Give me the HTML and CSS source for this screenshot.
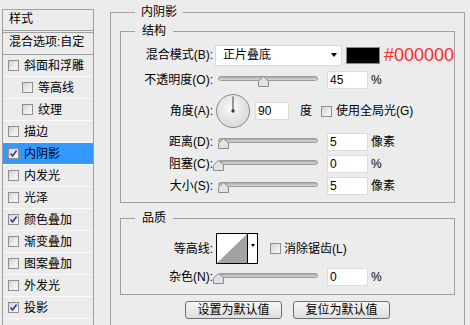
FILE: index.html
```html
<!DOCTYPE html>
<html lang="zh-CN">
<head>
<meta charset="utf-8">
<title>图层样式 - 内阴影</title>
<link rel="stylesheet" href="styles.css">
</head>
<body>
<div class="dialog">
  <nav class="styles-list">
    <div class="list-head">样式</div>
    <div class="list-blend">混合选项:自定</div>
    <ul class="list">
      <li class="item"><span class="cb"></span>斜面和浮雕</li>
      <li class="item sub"><span class="cb"></span>等高线</li>
      <li class="item sub"><span class="cb"></span>纹理</li>
      <li class="item"><span class="cb"></span>描边</li>
      <li class="item selected"><span class="cb"><svg viewBox="0 0 9 9" width="9" height="9"><path d="M1.5 4.5 L3.6 7 L7.6 1.6" fill="none" stroke="#2b3c93" stroke-width="1.6"/></svg></span>内阴影</li>
      <li class="item"><span class="cb"></span>内发光</li>
      <li class="item"><span class="cb"></span>光泽</li>
      <li class="item"><span class="cb"><svg viewBox="0 0 9 9" width="9" height="9"><path d="M1.5 4.5 L3.6 7 L7.6 1.6" fill="none" stroke="#2b3c93" stroke-width="1.6"/></svg></span>颜色叠加</li>
      <li class="item"><span class="cb"></span>渐变叠加</li>
      <li class="item"><span class="cb"></span>图案叠加</li>
      <li class="item"><span class="cb"></span>外发光</li>
      <li class="item"><span class="cb"><svg viewBox="0 0 9 9" width="9" height="9"><path d="M1.5 4.5 L3.6 7 L7.6 1.6" fill="none" stroke="#2b3c93" stroke-width="1.6"/></svg></span>投影</li>
    </ul>
  </nav>

  <main class="main">
    <fieldset class="group outer">
      <legend class="legend-outer">内阴影</legend>

      <fieldset class="group inner structure">
        <legend class="legend-inner">结构</legend>

        <div class="row">
          <span class="lbl">混合模式(B):</span>
          <div class="select"><span class="select-text">正片叠底</span><span class="caret"></span></div>
          <span class="swatch"></span>
          <span class="hex">#000000</span>
        </div>

        <div class="row row-opacity">
          <span class="lbl">不透明度(O):</span>
          <div class="slider"><span class="track"></span><span class="thumb" style="left:45%"><svg viewBox="0 0 11 11" width="11" height="11"><path d="M0.5 10.5 V5 L5.5 0.5 L10.5 5 V10.5 Z" fill="#e2e2e2" stroke="#8c8c8c"/></svg></span></div>
          <input class="field" type="text" value="45" readonly>
          <span class="unit">%</span>
        </div>

        <div class="row row-angle">
          <span class="lbl">角度(A):</span>
          <svg class="dial" viewBox="0 0 34 34" width="34" height="34">
            <defs>
              <radialGradient id="dialfill" cx="45%" cy="40%" r="65%">
                <stop offset="0" stop-color="#fafafa"/>
                <stop offset="1" stop-color="#d6d6d6"/>
              </radialGradient>
            </defs>
            <circle cx="17" cy="17" r="16.5" fill="url(#dialfill)" stroke="#8a8a8a"/>
            <line x1="17" y1="17" x2="17" y2="2.5" stroke="#5a5a5a" stroke-width="1.2"/>
            <circle cx="17" cy="17" r="1.7" fill="#3a3a3a"/>
          </svg>
          <input class="field field-angle" type="text" value="90" readonly>
          <span class="unit unit-deg">度</span>
          <span class="cb cb-global"></span>
          <span class="cb-label">使用全局光(G)</span>
        </div>

        <div class="row row-distance">
          <span class="lbl">距离(D):</span>
          <div class="slider"><span class="track"></span><span class="thumb" style="left:5%"><svg viewBox="0 0 11 11" width="11" height="11"><path d="M0.5 10.5 V5 L5.5 0.5 L10.5 5 V10.5 Z" fill="#e2e2e2" stroke="#8c8c8c"/></svg></span></div>
          <input class="field" type="text" value="5" readonly>
          <span class="unit">像素</span>
        </div>

        <div class="row">
          <span class="lbl">阻塞(C):</span>
          <div class="slider"><span class="track"></span><span class="thumb" style="left:0%"><svg viewBox="0 0 11 11" width="11" height="11"><path d="M0.5 10.5 V5 L5.5 0.5 L10.5 5 V10.5 Z" fill="#e2e2e2" stroke="#8c8c8c"/></svg></span></div>
          <input class="field" type="text" value="0" readonly>
          <span class="unit">%</span>
        </div>

        <div class="row">
          <span class="lbl">大小(S):</span>
          <div class="slider"><span class="track"></span><span class="thumb" style="left:5%"><svg viewBox="0 0 11 11" width="11" height="11"><path d="M0.5 10.5 V5 L5.5 0.5 L10.5 5 V10.5 Z" fill="#e2e2e2" stroke="#8c8c8c"/></svg></span></div>
          <input class="field" type="text" value="5" readonly>
          <span class="unit">像素</span>
        </div>
      </fieldset>

      <fieldset class="group inner quality">
        <legend class="legend-inner">品质</legend>

        <div class="row row-contour">
          <span class="lbl">等高线:</span>
          <div class="contour">
            <svg class="curve" viewBox="0 0 30 29" width="30" height="29" preserveAspectRatio="none">
              <rect width="30" height="29" fill="#fff"/>
              <polygon points="0,29 30,0 30,29" fill="#a2a2a2"/>
            </svg>
            <span class="contour-drop"><span class="caret"></span></span>
          </div>
          <span class="cb cb-aa"></span>
          <span class="cb-label">消除锯齿(L)</span>
        </div>

        <div class="row row-noise">
          <span class="lbl">杂色(N):</span>
          <div class="slider"><span class="track"></span><span class="thumb" style="left:0%"><svg viewBox="0 0 11 11" width="11" height="11"><path d="M0.5 10.5 V5 L5.5 0.5 L10.5 5 V10.5 Z" fill="#e2e2e2" stroke="#8c8c8c"/></svg></span></div>
          <input class="field" type="text" value="0" readonly>
          <span class="unit">%</span>
        </div>
      </fieldset>

      <div class="buttons">
        <button class="btn" type="button">设置为默认值</button>
        <button class="btn" type="button">复位为默认值</button>
      </div>
    </fieldset>
  </main>
</div>
</body>
</html>
```
FILE: styles.css
```css
* {
  box-sizing: border-box;
}

html,
body {
  margin: 0;
  padding: 0;
}

body {
  width: 470px;
  height: 325px;
  overflow: hidden;
  background: #ececec;
  color: #000;
  font: 12px/16px "Liberation Sans", "Noto Sans CJK SC", sans-serif;
}

.dialog {
  display: flex;
  align-items: flex-start;
  height: 325px;
}

/* ---------- left style list ---------- */
.styles-list {
  margin: 9px 0 0 2px;
  width: 92px;
  height: 316px;
  border: 1px solid #a0a0a0;
  border-bottom: none;
  flex: none;
}

.list-head {
  height: 23px;
  padding: 1px 0 0 6px;
  border-bottom: 3px double #a0a0a0;
}

.list-blend {
  height: 22px;
  padding: 1px 0 0 6px;
  border-bottom: 1px solid #a0a0a0;
}

.list {
  list-style: none;
  margin: 0;
  padding: 0;
}

.item {
  display: flex;
  align-items: center;
  height: 22px;
  padding-left: 5px;
  border-bottom: 1px solid #fafafa;
}

.item.sub {
  padding-left: 19px;
}

.item.selected {
  background: #3399ff;
}

.item .cb {
  margin-right: 5px;
}

/* ---------- checkbox ---------- */
.cb {
  display: inline-flex;
  align-items: center;
  justify-content: center;
  flex: none;
  width: 11px;
  height: 11px;
  border: 1px solid #8f8f8f;
  background: linear-gradient(135deg, #d2d2d2 0%, #ececec 55%, #f8f8f8 100%);
}

.cb svg {
  display: block;
}

.cb-label {
  margin-left: 3px;
  white-space: nowrap;
}

/* ---------- right panel ---------- */
.main {
  margin: 4px 0 0 16px;
  width: 355px;
  flex: none;
}

.group {
  margin: 0;
  min-width: 0;
  border: 1px solid #a0a0a0;
}

.outer {
  padding: 3px 9px 7px 9px;
  border-bottom: none;
}

.legend-outer {
  margin-left: 15px;
  padding: 0 6px;
  line-height: 16px;
}

.inner {
  padding: 0;
}

.legend-inner {
  margin-left: 14px;
  padding: 0 7px;
  line-height: 16px;
}

.structure {
  padding: 5px 0 5px 0;
}

.quality {
  margin-top: 7px;
  padding: 7px 0 6px 0;
}

.row {
  display: flex;
  align-items: center;
  height: 22px;
  white-space: nowrap;
}

.row-opacity {
  margin-top: 3px;
}

.row-angle {
  height: 34px;
  margin-top: 3px;
}

.row-distance {
  margin-top: 3px;
}

.row-contour {
  height: 31px;
}

.row-noise {
  margin-top: 2px;
}

.lbl {
  width: 92px;
  flex: none;
  text-align: right;
}

/* select */
.select {
  display: flex;
  align-items: center;
  justify-content: space-between;
  margin-left: 2px;
  width: 133px;
  height: 21px;
  padding: 0 4px 0 7px;
  background: #fff;
  border: 1px solid #d9d9d9;
}

.caret {
  width: 0;
  height: 0;
  border-left: 3px solid transparent;
  border-right: 3px solid transparent;
  border-top: 4px solid #000;
}

.swatch {
  margin-left: 4px;
  width: 34px;
  height: 17px;
  background: #000;
  border: 1px solid #8a8a8a;
  flex: none;
}

.hex {
  margin-left: 4px;
  font-size: 18px;
  line-height: 22px;
  color: #ff2a2a;
}

/* slider */
.slider {
  position: relative;
  align-self: flex-start;
  margin: 7px 0 0 5px;
  width: 100px;
  height: 11px;
  flex: none;
}

.track {
  display: block;
  height: 5px;
  border: 1px solid #9b9b9b;
  border-radius: 3px;
  background: linear-gradient(#a9a9a9, #d8d8d8);
}

.thumb {
  position: absolute;
  top: 0;
  margin-left: -5px;
  width: 11px;
  height: 11px;
}

.thumb svg {
  display: block;
}

/* fields */
.field {
  margin: 0 0 0 9px;
  width: 41px;
  height: 18px;
  padding: 0 0 0 2px;
  border: 1px solid #dcdcdc;
  background: #fff;
  color: #000;
  font: 12px/16px "Liberation Sans", "Noto Sans CJK SC", sans-serif;
  outline: none;
  flex: none;
}

.unit {
  margin-left: 3px;
}

.dial {
  margin-left: 3px;
  flex: none;
  display: block;
}

.field-angle {
  margin-left: 5px;
  width: 34px;
}

.unit-deg {
  margin-left: 11px;
}

.cb-global {
  margin-left: 9px;
}

.cb-global + .cb-label {
  margin-left: 4px;
}

/* contour */
.contour {
  display: flex;
  margin-left: 3px;
  height: 31px;
  border: 1px solid #000;
  flex: none;
}

.curve {
  display: block;
  width: 30px;
  height: 29px;
}

.contour-drop {
  display: flex;
  justify-content: center;
  padding-top: 10px;
  width: 10px;
  border-left: 1px solid #000;
  background: #fff;
}

.contour-drop .caret {
  border-left-width: 2.5px;
  border-right-width: 2.5px;
  border-top-width: 3px;
}

.cb-aa {
  margin-left: 12px;
}

/* buttons */
.buttons {
  display: flex;
  justify-content: center;
  gap: 11px;
  margin-top: 6px;
}

.btn {
  width: 97px;
  height: 18px;
  padding: 0;
  border: 1px solid #6f6f6f;
  border-radius: 3px;
  background: linear-gradient(#f6f6f6, #dedede);
  color: #000;
  font: 12px/16px "Liberation Sans", "Noto Sans CJK SC", sans-serif;
}
```
